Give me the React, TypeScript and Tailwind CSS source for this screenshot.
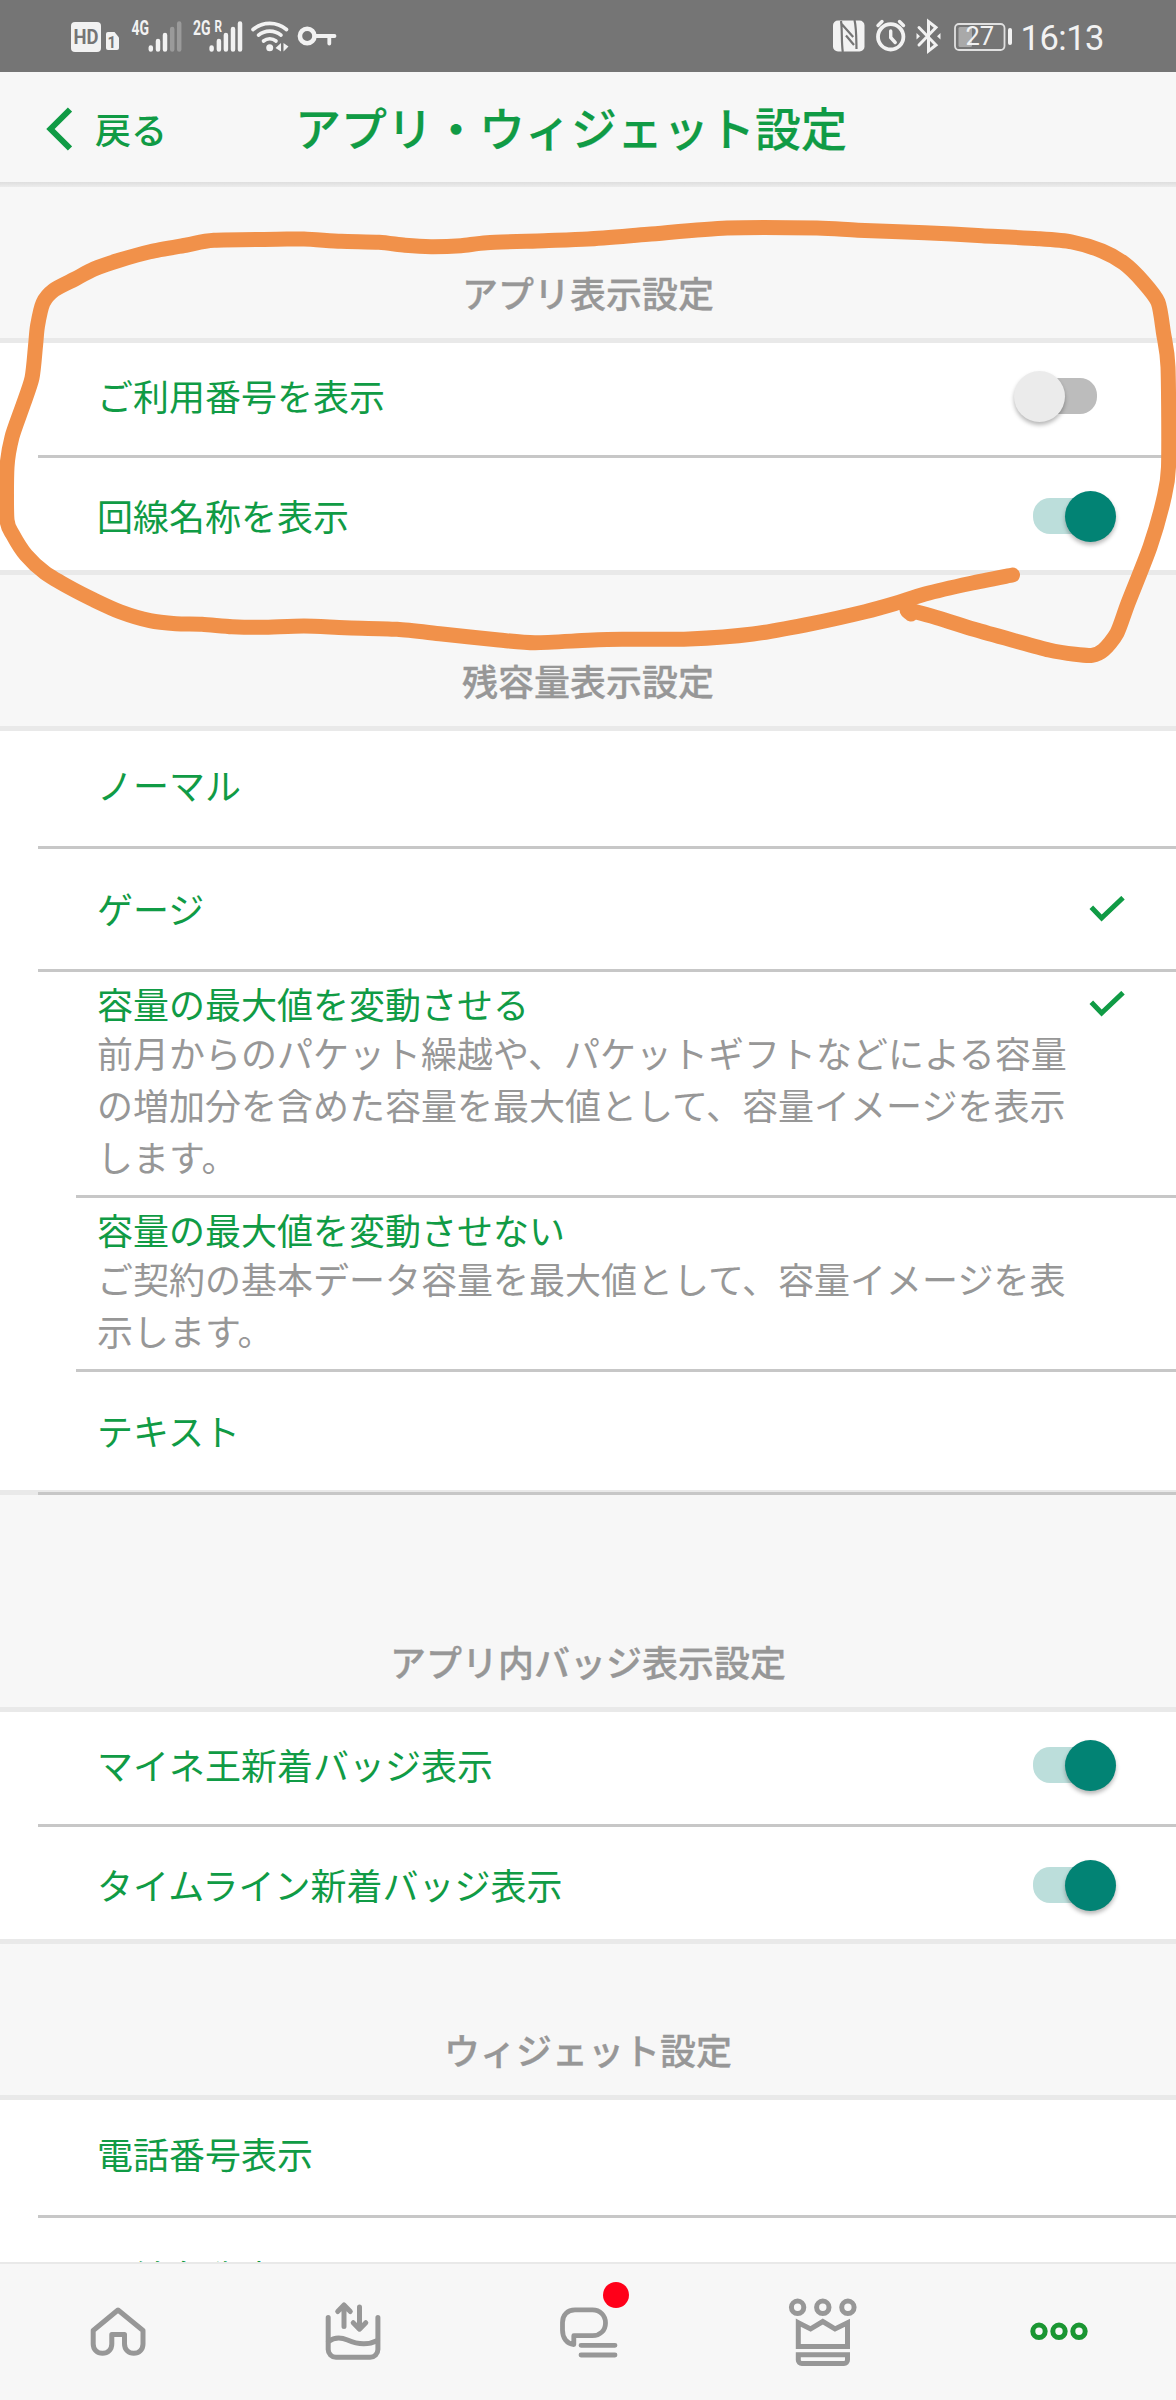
import { useState } from "react";

interface IconProps {
  className?: string;
}

function StatusLeft() {
  return (
    <svg width="290" height="72" viewBox="60 0 290 72" fill="#f2f2f2" fontFamily="Roboto">
      <rect x="71" y="22" width="30" height="30" rx="4" />
      <text x="73.500" y="44" fontSize="20" fontWeight="700" fill="#757575" textLength="25" lengthAdjust="spacingAndGlyphs">HD</text>
      <path d="M108 32h6.500l4.500 5.500v10.500a2 2 0 0 1-2 2h-9a2 2 0 0 1-2-2v-14a2 2 0 0 1 2-2z" />
      <text x="107.500" y="47.500" fontSize="16.500" fontWeight="700" fill="#757575" textLength="8.500" lengthAdjust="spacingAndGlyphs">1</text>

      <text x="131.500" y="35" fontSize="20" fontWeight="700" textLength="17.500" lengthAdjust="spacingAndGlyphs">4G</text>
      <g stroke="#f2f2f2" strokeWidth="4.500" strokeLinecap="round">
        <path d="M150.800 47.500v2M158 41v8.500M165 35v14.500" />
        <path d="M172.200 29v20.500M179.200 23.500v26" stroke="#9a9a9a" />
      </g>

      <text x="193" y="35" fontSize="20" fontWeight="700" textLength="17.500" lengthAdjust="spacingAndGlyphs">2G</text>
      <text x="214.500" y="32.300" fontSize="16" fontWeight="700" textLength="7.500" lengthAdjust="spacingAndGlyphs">R</text>
      <path d="M211.600 47.500v2M218.900 41v8.500M225.900 35v14.500M233 29v20.500M240 23.500v26" stroke="#f2f2f2" strokeWidth="4.500" strokeLinecap="round" />

      <g fill="none" stroke="#f2f2f2" strokeWidth="3.600" strokeLinecap="round">
        <path d="M253 29.500a26 26 0 0 1 33.500 0" />
        <path d="M258.500 35.200a17.500 17.500 0 0 1 22.500 0" />
        <path d="M263.500 41a10 10 0 0 1 12.500 0" />
      </g>
      <circle cx="269.700" cy="47.700" r="3.500" />
      <path d="M281 43v8.500l-5.500-3.500zM283.500 43v8.500l5-5z" />

      <circle cx="307.200" cy="36" r="7.300" fill="none" stroke="#f2f2f2" strokeWidth="4.600" />
      <path d="M316 36h18.500M329.300 36v7.500" fill="none" stroke="#f2f2f2" strokeWidth="3.800" strokeLinecap="round" />
    </svg>
  );
}

function StatusRight() {
  return (
    <svg width="300" height="72" viewBox="820 0 300 72" fill="#f2f2f2" fontFamily="Roboto">
      <rect x="833" y="20.500" width="31.500" height="31" rx="5" />
      <path
        d="M841 21c1.300 8 .3 21 1.800 31M841.200 23.500l12 13.500M846 35.500l8 9.500M854.500 20c2 8 1.800 21 2 29"
        fill="none"
        stroke="#757575"
        strokeWidth="2.200"
      />

      <g fill="none" stroke="#f2f2f2" strokeLinecap="round">
        <circle cx="890.700" cy="36.800" r="12.700" strokeWidth="3.800" />
        <path d="M890.700 31v6.500l4.500 5M878 25.500l4-4M903.500 25.500l-4-4" strokeWidth="3.400" />
        <path d="M919 27.500l17 17.500-7.500 6v-29.500l7.500 6-17 17.500" strokeWidth="3" />
      </g>
      <path d="M916.500 33v6.500l3.500-3.200zM940.500 33v6.500l-3.500-3.200z" />

      <rect x="955" y="24" width="49.500" height="26" rx="4" fill="none" stroke="#e0e0e0" strokeWidth="1.800" />
      <rect x="958.500" y="27" width="13.500" height="20" rx="1.500" fill="#a9a9a9" />
      <rect x="1008" y="28" width="4" height="17" rx="2" />
      <text x="965.500" y="45.300" fontSize="25.500">27</text>
      <text x="1020.500" y="49.500" fontSize="34.500" textLength="84">16:13</text>
    </svg>
  );
}

function CheckIcon() {
  return (
    <svg width="36" height="26" viewBox="0 0 36 26" fill="none" stroke="#109b45" strokeWidth="5">
      <path d="M2.300 11.300l10.300 10.700 21.400-20.300" />
    </svg>
  );
}

function HomeIcon({ className }: IconProps) {
  return (
    <svg className={className} width="80" height="80" viewBox="77.500 2290 80 80" fill="none" stroke="currentColor" strokeWidth="5" strokeLinejoin="round">
      <path d="M117.500 2310l25 20.500v13.500c0 5.500-4 9.300-9.200 9.300s-9.300-3.800-9.300-9.300v-9.500h-12.700v9.500c0 5.500-4 9.300-9.300 9.300s-9.300-3.800-9.300-9.300v-13.500z" />
    </svg>
  );
}

function DataIcon({ className }: IconProps) {
  return (
    <svg className={className} width="80" height="80" viewBox="312.500 2290 80 80" fill="none" stroke="currentColor" strokeWidth="5" strokeLinecap="round" strokeLinejoin="round">
      <path d="M327.700 2317.500v32a7.700 7.700 0 0 0 7.700 7.700h34.300a7.700 7.700 0 0 0 7.700-7.700v-32" />
      <path d="M328 2341.500c6-4.500 13-4 19-1.500c10 4.500 20 5.500 30 0.500" />
      <path d="M343.500 2326.500v-21.500m-6.300 6.500l6.300-6.500l6.300 6.500M359 2307v22m-6.300-6.300l6.300 6.500l6.300-6.500" />
    </svg>
  );
}

function TalkIcon({ className }: IconProps) {
  return (
    <svg className={className} width="80" height="80" viewBox="548 2290 80 80" fill="none" stroke="currentColor" strokeWidth="4.800">
      <path d="M573.800 2344.500c-7-.5-11.300-6.500-11.300-14.500v-7.500c0-7.500 5-12.600 12.500-12.600h17.500c7.500 0 13 5.500 13 13s-5.500 12.800-13 12.800h-18.700z" strokeLinejoin="round" />
      <path d="M581 2345.300h34M581 2355h34" strokeLinecap="round" />
    </svg>
  );
}

function CrownIcon({ className }: IconProps) {
  return (
    <svg className={className} width="80" height="80" viewBox="782.700 2290 80 80" fill="none" stroke="currentColor" strokeWidth="5">
      <circle cx="797.300" cy="2307.300" r="6.200" />
      <circle cx="822.500" cy="2307.300" r="6.200" />
      <circle cx="847.600" cy="2307.300" r="6.200" />
      <path d="M798 2322.700l12.300 6.300 12.200-7.500 12.200 7.500 12.500-6.300v23.700h-49.200z" />
      <path d="M798 2354.800h49.200v5.200a3.500 3.500 0 0 1-3.500 3.500h-42.200a3.500 3.500 0 0 1-3.500-3.500z" />
    </svg>
  );
}

function MoreIcon({ className }: IconProps) {
  return (
    <svg className={className} width="80" height="80" viewBox="1018.500 2290 80 80" fill="none" stroke="currentColor" strokeWidth="5">
      <circle cx="1039.500" cy="2331.300" r="6.200" />
      <circle cx="1059.500" cy="2331.300" r="6.200" />
      <circle cx="1079.500" cy="2331.300" r="6.200" />
    </svg>
  );
}

interface ToggleRowProps {
  label: string;
  initial: boolean;
  className?: string;
}

function ToggleRow({ label, initial, className }: ToggleRowProps) {
  const [on, setOn] = useState(initial);

  return (
    <div className={`flex h-28 items-center justify-between pl-[97px] pr-[59px] ${className}`}>
      <span className="pb-[3px]">{label}</span>
      <button
        role="switch"
        aria-checked={on}
        aria-label={label}
        onClick={() => setOn(!on)}
        className="flex h-[52px] w-[104px] items-center justify-center"
      >
        <span className={`flex h-9 w-16 items-center rounded-[17px] ${on ? "justify-end bg-[#bcdedb]" : "justify-start bg-[#bcbcbc]"}`}>
          <span
            className={`size-[51px] shrink-0 rounded-full shadow-[0_3px_4px_rgba(0,0,0,0.28)] ${on ? "-mr-[19px] bg-[#028374]" : "-ml-[19px] bg-[#ebebeb]"}`}
          />
        </span>
      </button>
    </div>
  );
}

interface ChoiceRowProps {
  label: string;
  checked?: boolean;
  className?: string;
}

function ChoiceRow({ label, checked, className }: ChoiceRowProps) {
  return (
    <div className={`flex items-center justify-between pl-[97px] pr-[51px] ${className}`}>
      <span className="pb-[3px]">{label}</span>
      {checked && <CheckIcon />}
    </div>
  );
}

interface DetailRowProps {
  label: string;
  lines: string[];
  checked?: boolean;
}

function DetailRow({ label, lines, checked }: DetailRowProps) {
  return (
    <div className="pb-[13px] pl-[97px] pt-[9px]">
      <div className="flex h-[45px] items-center justify-between pr-[51px]">
        <span className="pb-0.5">{label}</span>
        {checked && <CheckIcon />}
      </div>
      <p className="leading-[52px] text-[#979797]">
        {lines.map((line) => (
          <span key={line} className="block whitespace-nowrap">{line}</span>
        ))}
      </p>
    </div>
  );
}

function SectionTitle({ title, className = "h-[151px]" }: { title: string; className?: string }) {
  return (
    <h2 className={`flex items-end justify-center bg-[#f7f7f7] pb-5 font-medium leading-[52px] text-[#979797] [-webkit-text-stroke:0.3px_#979797] ${className}`}>
      {title}
    </h2>
  );
}

function Edge() {
  return <div className="h-[5px] bg-[#e9e9e9]" />;
}

function Divider({ className = "ml-[38px]" }: { className?: string }) {
  return <div className={`h-[3px] bg-[#c7c7c7] ${className}`} />;
}

const strokePoints = [
  [1012.5, 575], [970, 583.5], [925, 594], [895, 603.5], [865, 611.7], [813, 623.3], [753, 634], [689, 639],
  [622, 639.3], [588, 640.3], [535, 642.7], [499, 640], [442, 634], [397, 629.3], [345, 627.7], [304, 626],
  [262, 627.3], [232, 626.7], [202, 624.3], [176, 623.7], [150, 620.7], [120, 611.7], [94, 600], [71, 588.3],
  [45, 572.7], [26, 555], [13, 535], [7, 520], [7, 467], [12, 437], [22.5, 406.7], [32, 378], [35.5, 346],
  [37.5, 326], [43, 303], [54, 290], [75, 279], [94, 269], [120, 260], [150, 251.7], [187, 245], [214, 240.3],
  [277, 239.3], [304, 239], [341, 241.3], [379, 242.3], [405, 245.3], [431, 246.7], [461, 245.7], [487, 242.7],
  [544, 240.7], [588, 239], [648, 234.3], [727, 228], [817, 228], [858, 230.3], [925, 232.7], [982, 235.7],
  [1038, 238.7], [1072, 242], [1102, 251], [1124, 263.3], [1143, 281.7], [1158, 302], [1163.5, 333], [1168, 367],
  [1168.5, 467], [1163.5, 500], [1150, 547], [1128, 603.3], [1117, 633], [1103.5, 650], [1092, 655.3],
  [1075, 654.3], [1049, 650], [1012, 640], [974, 629.3], [937, 617.7], [908, 610], [911, 614],
];

// Catmull-Rom through the points, so the line bends like a marker
function smooth(points: number[][]) {
  let d = `M${points[0].join(" ")}`;
  for (let i = 0; i < points.length - 1; i++) {
    const p0 = points[i - 1] ?? points[i];
    const p1 = points[i];
    const p2 = points[i + 1];
    const p3 = points[i + 2] ?? p2;
    d += `C${p1[0] + (p2[0] - p0[0]) / 8} ${p1[1] + (p2[1] - p0[1]) / 8} ${p2[0] - (p3[0] - p1[0]) / 8} ${p2[1] - (p3[1] - p1[1]) / 8} ${p2[0]} ${p2[1]}`;
  }
  return d;
}

// Freehand marker drawn around the first section
function Marker() {
  return (
    <svg className="pointer-events-none absolute left-0 top-0" width="1176" height="700" viewBox="0 0 1176 700">
      <path d={smooth(strokePoints)} fill="none" stroke="#f1914a" strokeWidth="15" strokeLinecap="round" strokeLinejoin="round" />
    </svg>
  );
}

export default function App() {
  return (
    <div className="relative flex h-[2400px] w-[1176px] flex-col overflow-hidden bg-white font-['Noto_Sans_CJK_JP',sans-serif] text-[36px] leading-[52px] text-[#109b45]" lang="ja">
      <div className="flex h-[72px] shrink-0 justify-between bg-[#757575] pl-[60px] pr-14">
        <StatusLeft />
        <StatusRight />
      </div>

      <header className="flex h-[110px] shrink-0 items-center bg-[#f7f7f7] font-medium">
        <button className="flex w-[295px] items-center gap-[23px] pl-[45px] pt-1">
          <svg width="27" height="44" viewBox="0 0 27 44" fill="none" stroke="currentColor" strokeWidth="6">
            <path d="M25 2.500l-19.500 19.500 19.500 19.500" />
          </svg>
          <span className="pb-[3px]">戻る</span>
        </button>
        <h1 className="pb-0.5 text-[46px] [-webkit-text-stroke:0.2px_#109b45]">アプリ・ウィジェット設定</h1>
      </header>
      <div className="h-[5px] shrink-0 bg-linear-to-b from-[#dedede] to-[#ececec]" />

      <main className="min-h-0 flex-1 overflow-hidden">
        <SectionTitle title="アプリ表示設定" />
        <Edge />
        <ToggleRow label="ご利用番号を表示" initial={false} className="pb-1.5" />
        <Divider />
        <ToggleRow label="回線名称を表示" initial={true} className="pt-1" />
        <Edge />

        <SectionTitle title="残容量表示設定" />
        <Edge />
        <ChoiceRow label="ノーマル" className="h-[115px] pb-1.5" />
        <Divider />
        <ChoiceRow label="ゲージ" checked className="h-[120px]" />
        <Divider />
        <DetailRow
          label="容量の最大値を変動させる"
          lines={["前月からのパケット繰越や、パケットギフトなどによる容量", "の増加分を含めた容量を最大値として、容量イメージを表示", "します。"]}
          checked
        />
        <Divider className="ml-[76px]" />
        <DetailRow
          label="容量の最大値を変動させない"
          lines={["ご契約の基本データ容量を最大値として、容量イメージを表", "示します。"]}
        />
        <Divider className="ml-[76px]" />
        <ChoiceRow label="テキスト" className="h-[118px]" />
        <div className="bg-[#e9e9e9] pt-0.5">
          <Divider />
        </div>

        <SectionTitle title="アプリ内バッジ表示設定" className="h-[212px]" />
        <Edge />
        <ToggleRow label="マイネ王新着バッジ表示" initial={true} className="pb-1.5" />
        <Divider />
        <ToggleRow label="タイムライン新着バッジ表示" initial={true} className="pt-1" />
        <Edge />

        <SectionTitle title="ウィジェット設定" />
        <Edge />
        <ChoiceRow label="電話番号表示" className="h-[115px] pb-1.5" />
        <Divider />
        <ChoiceRow label="回線名称表示" className="h-[119px]" />
      </main>

      <nav className="grid h-[138px] shrink-0 grid-cols-5 items-center justify-items-center border-t-2 border-[#e9e9e9] bg-[#f7f7f7] pb-1 text-[#979797]">
        <HomeIcon />
        <DataIcon />
        <div className="relative">
          <TalkIcon />
          <span className="absolute left-[55px] top-[-8px] size-[26px] rounded-full bg-[#ff0019]" />
        </div>
        <CrownIcon />
        <MoreIcon className="text-[#1a9632]" />
      </nav>

      <Marker />
    </div>
  );
}
